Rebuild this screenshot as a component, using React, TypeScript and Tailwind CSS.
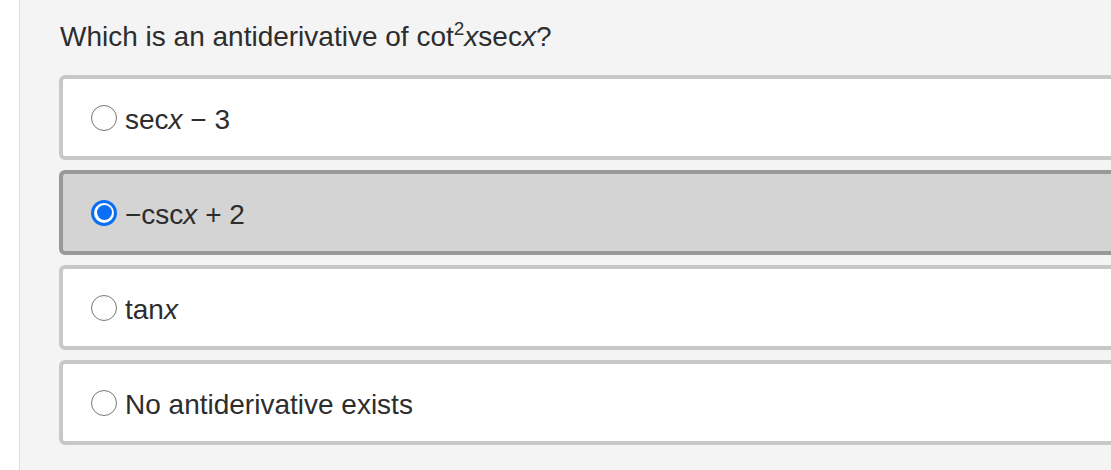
const OPTIONS = [
  { id: 'a', pre: 'sec', x: true, post: ' − 3' },
  { id: 'b', pre: '−csc', x: true, post: ' + 2' },
  { id: 'c', pre: 'tan', x: true, post: '' },
  { id: 'd', pre: 'No antiderivative exists', x: false, post: '' },
]

function Radio({ checked }: { checked: boolean }) {
  if (checked) {
    return (
      <span className="w-[26px] h-[26px] rounded-full bg-[#0a6ff5] flex items-center justify-center flex-shrink-0">
        <span className="w-[20px] h-[20px] rounded-full bg-white flex items-center justify-center">
          <span className="w-[15px] h-[15px] rounded-full bg-[#0a6ff5]" />
        </span>
      </span>
    )
  }
  return <span className="w-[26px] h-[26px] rounded-full border-[1.5px] border-[#767676] bg-white flex-shrink-0" />
}

export default function App() {
  const selected = 'b'

  return (
    <div className="w-[1111px] h-[470px] bg-white flex overflow-hidden font-['Liberation_Sans',Arial,sans-serif] text-[#2d2d2d]">
      <div className="w-[20px] flex-shrink-0 bg-white border-r border-[#dedede]" />
      <div className="flex-1 bg-[#f4f4f4] pl-[39px] pt-[17px]">
        <p className="h-[40px] text-[28px] leading-[40px] pl-[1px]">
          Which is an antiderivative of cot
          <span className="text-[19px] leading-none relative -top-[11px]">2</span>
          <i>x</i>sec<i>x</i>?
        </p>
        <div className="mt-[18px] flex flex-col gap-[10px] w-[1100px]">
          {OPTIONS.map((o) => {
            const isSel = o.id === selected
            return (
              <label
                key={o.id}
                className={`h-[85px] rounded-[6px] border-4 flex items-center gap-[8px] pl-[28px] ${
                  isSel ? 'bg-[#d4d4d4] border-[#999999]' : 'bg-white border-[#c8c8c8]'
                }`}
              >
                <Radio checked={isSel} />
                <span className="text-[28px] leading-none mt-[4px]">
                  {o.pre}
                  {o.x && <i>x</i>}
                  {o.post}
                </span>
              </label>
            )
          })}
        </div>
      </div>
    </div>
  )
}
